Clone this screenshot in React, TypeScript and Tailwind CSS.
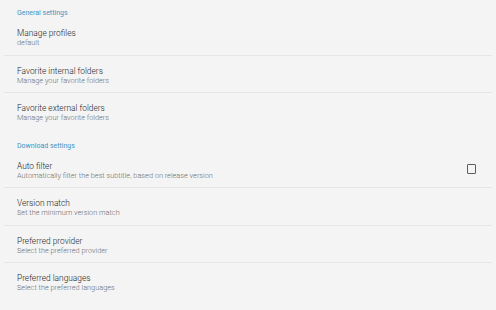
import React from "react";

type Item = { title: string; sub: string; divider: boolean; checkbox?: boolean };

const general: Item[] = [
  { title: "Manage profiles", sub: "default", divider: true },
  { title: "Favorite internal folders", sub: "Manage your favorite folders", divider: true },
  { title: "Favorite external folders", sub: "Manage your favorite folders", divider: false },
];

const download: Item[] = [
  { title: "Auto filter", sub: "Automatically filter the best subtitle, based on release version", divider: true, checkbox: true },
  { title: "Version match", sub: "Set the minimum version match", divider: true },
  { title: "Preferred provider", sub: "Select the preferred provider", divider: true },
  { title: "Preferred languages", sub: "Select the preferred languages", divider: false },
];

function Row({ item }: { item: Item }) {
  return (
    <div
      className={
        "flex items-center h-[37.5px] " +
        (item.divider ? "border-b border-[#e6e6e6]" : "")
      }
    >
      <div className="flex-1 pl-[13px] pt-[10px] pb-[7.5px] self-start">
        <div className="text-[8.35px] leading-[10px] font-light text-[#1e1e1e]">{item.title}</div>
        <div className="text-[7.35px] leading-[10px] font-light text-[#6e6e6e]">{item.sub}</div>
      </div>
      {item.checkbox && (
        <div className="mr-[16px] w-[9.5px] h-[9.5px] border-[1.5px] border-[#5c5c5c] rounded-[1px]" />
      )}
    </div>
  );
}

function Header({ label, top }: { label: string; top: string }) {
  return (
    <div className={"pl-[13px] " + top}>
      <div className="text-[7px] leading-[10px] font-normal text-[#3f95c2]">{label}</div>
    </div>
  );
}

export default function App() {
  return (
    <div
      className="w-[496px] h-[310px] bg-[#f4f4f4] px-1 overflow-hidden"
      style={{ fontFamily: "Roboto, 'Noto Sans', sans-serif" }}
    >
      <Header label="General settings" top="pt-[8px]" />
      {general.map((it) => (
        <Row key={it.title} item={it} />
      ))}
      <Header label="Download settings" top="pt-[10px]" />
      {download.map((it) => (
        <Row key={it.title} item={it} />
      ))}
    </div>
  );
}
